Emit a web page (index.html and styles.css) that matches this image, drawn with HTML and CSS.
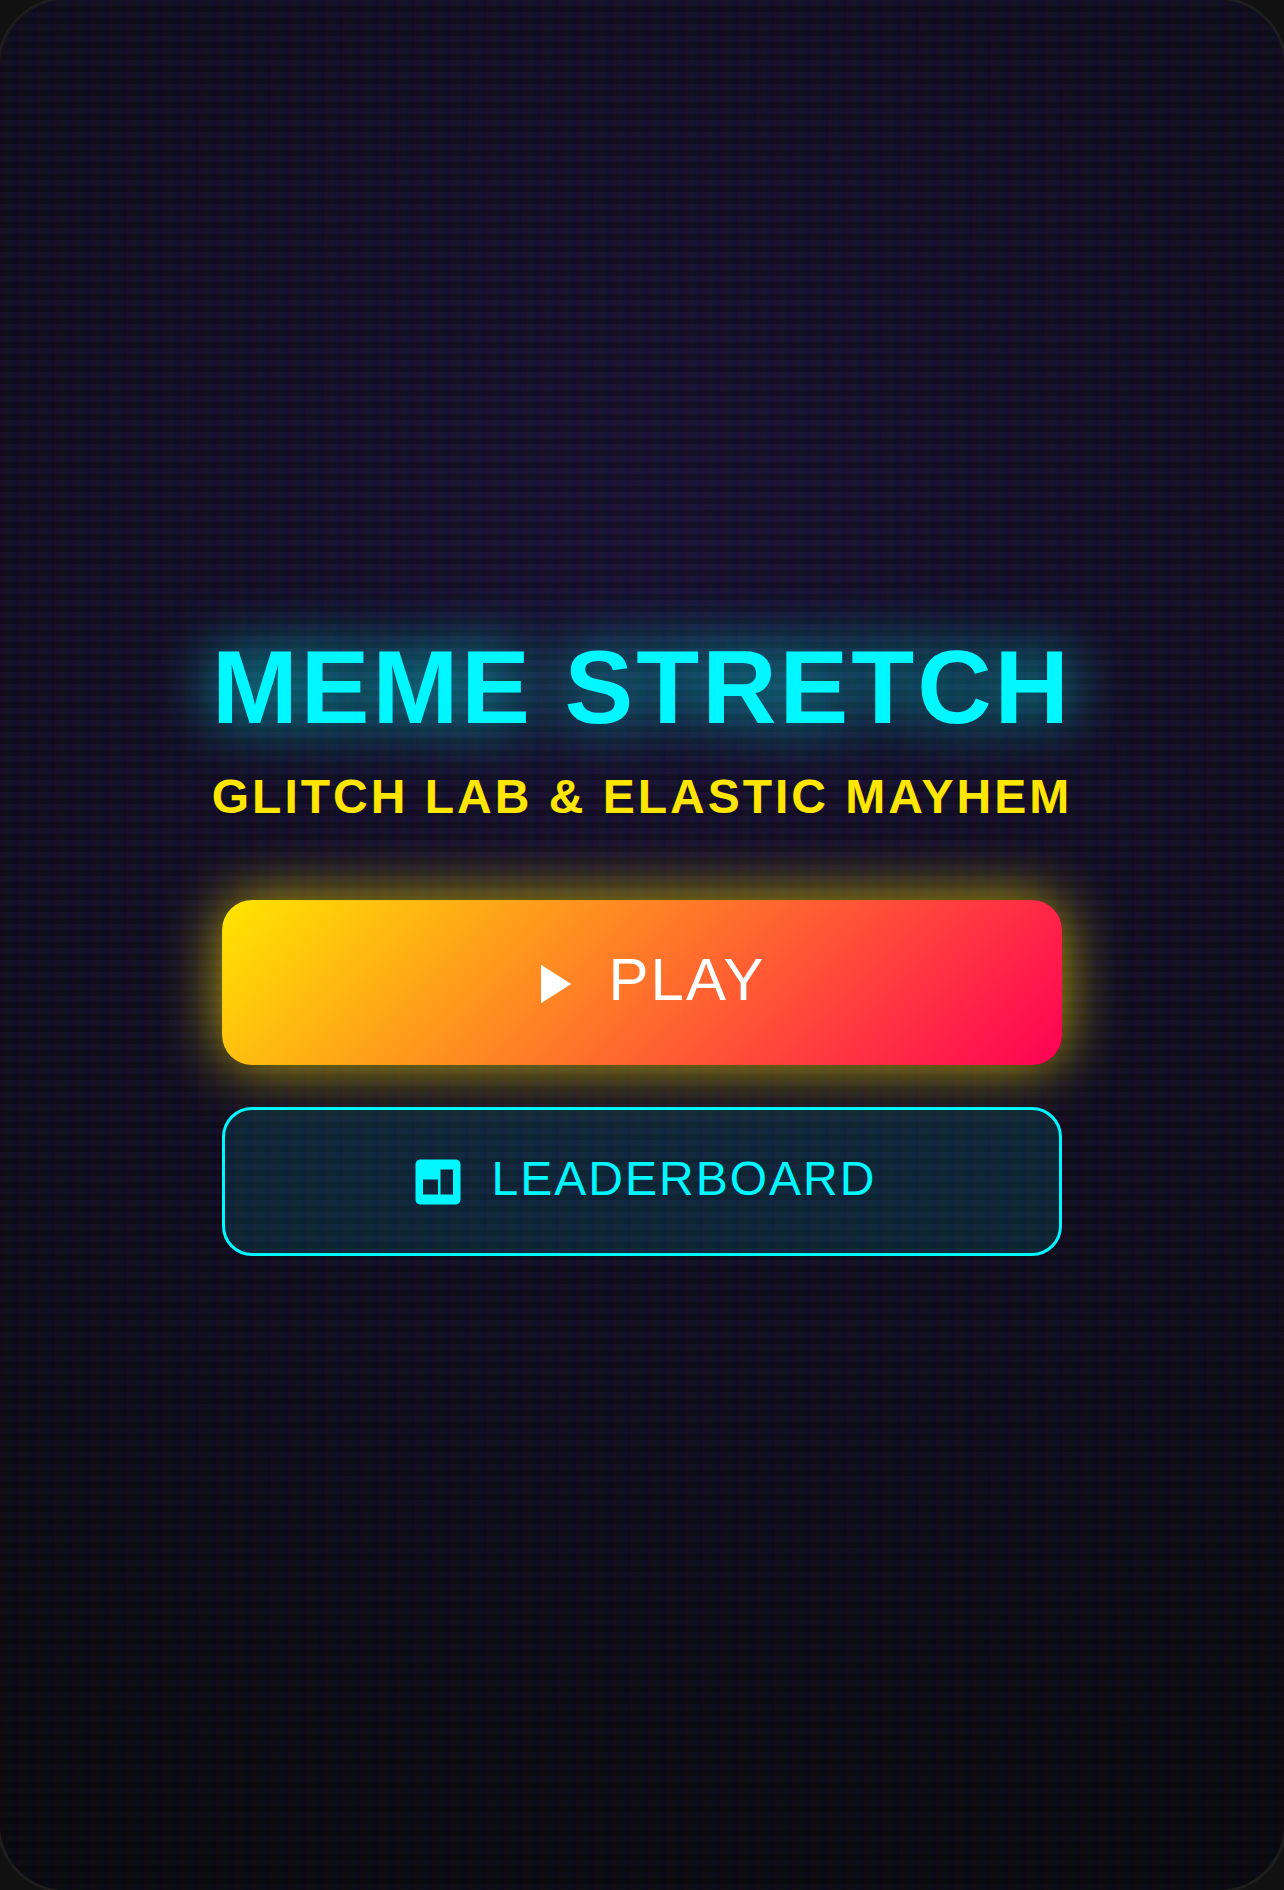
FILE: index.html
```html
<!DOCTYPE html>
<html lang="en">
  <head>
    <meta charset="UTF-8" />
    <meta name="viewport" content="width=device-width, initial-scale=1.0" />
    <title>Meme Stretch</title>
    <link rel="stylesheet" href="styles.css">
  </head>
  <body>
    <main class="game">
      <h1 class="title">MEME STRETCH</h1>
      <p class="subtitle">GLITCH LAB &amp; ELASTIC MAYHEM</p>

      <div class="menu">
        <button class="btn btn-play" type="button">
          <svg class="icon" viewBox="0 0 24 24" aria-hidden="true"><path d="M8 5v14l11-7z"/></svg>PLAY
        </button>
        <button class="btn btn-outline" type="button">
          <svg class="icon" viewBox="0 0 24 24" aria-hidden="true"><path fill-rule="evenodd" d="M5 3h14c1.100 0 2 .9 2 2v14c0 1.100-.9 2-2 2H5c-1.100 0-2-.9-2-2V5c0-1.100.9-2 2-2zM6 11v6h6v-6zM13 7v10h5V7z"/></svg>LEADERBOARD
        </button>
      </div>
    </main>
  </body>
</html>
```
FILE: styles.css
```css
* {
  box-sizing: border-box;
}

body {
  margin: 0;
  background-color: #111;
  font-family: "Liberation Sans", Arial, sans-serif;
}

/* scanlines and rgb columns sit on top of the radial glow */
.game {
  display: flex;
  flex-direction: column;
  align-items: center;
  justify-content: center;
  min-height: 100vh;
  border-radius: 66px;
  box-shadow: 0 0 0 3px #1e1e1e;
  background:
    linear-gradient(rgba(18, 16, 16, 0) 50%, rgba(0, 0, 0, 0.25) 50%) 0 0 / 100% 12px,
    linear-gradient(90deg, rgba(255, 0, 0, 0.04), rgba(0, 255, 0, 0.02), rgba(0, 0, 255, 0.04)) 0 0 / 18px 100%,
    radial-gradient(circle at 50% 30%, #1c1338 0%, #0a0a12 95%);
}

.title {
  margin: 0 0 27px;
  color: #00f7ff;
  font-size: 103px;
  line-height: 108px;
  letter-spacing: 3px;
  text-align: center;
  text-shadow: 0 0 60px rgba(0, 247, 255, 0.8);
}

.subtitle {
  margin: 0 0 75px;
  color: #ffe600;
  font-size: 48px;
  font-weight: bold;
  line-height: 56px;
  letter-spacing: 3px;
  text-align: center;
}

.menu {
  display: flex;
  flex-direction: column;
  gap: 42px;
  width: 100%;
  max-width: 840px;
}

.btn {
  width: 100%;
  border: none;
  border-radius: 30px;
  font-family: inherit;
  letter-spacing: 2px;
  cursor: pointer;
}

.btn-play {
  padding: 45px 45px 48px;
  background: linear-gradient(135deg, #ffe600, #ff0055);
  box-shadow: 0 0 60px rgba(255, 230, 0, 0.7);
  color: #fff;
  font-size: 60px;
}

.btn-outline {
  padding: 41px 45px;
  border: 3px solid #00f7ff;
  background: rgba(0, 247, 255, 0.1);
  color: #00f7ff;
  font-size: 48px;
}

.icon {
  width: 60px;
  height: 60px;
  margin-right: 24px;
  fill: currentColor;
  vertical-align: middle;
}

.btn-play .icon {
  width: 66px;
  height: 66px;
}
```
